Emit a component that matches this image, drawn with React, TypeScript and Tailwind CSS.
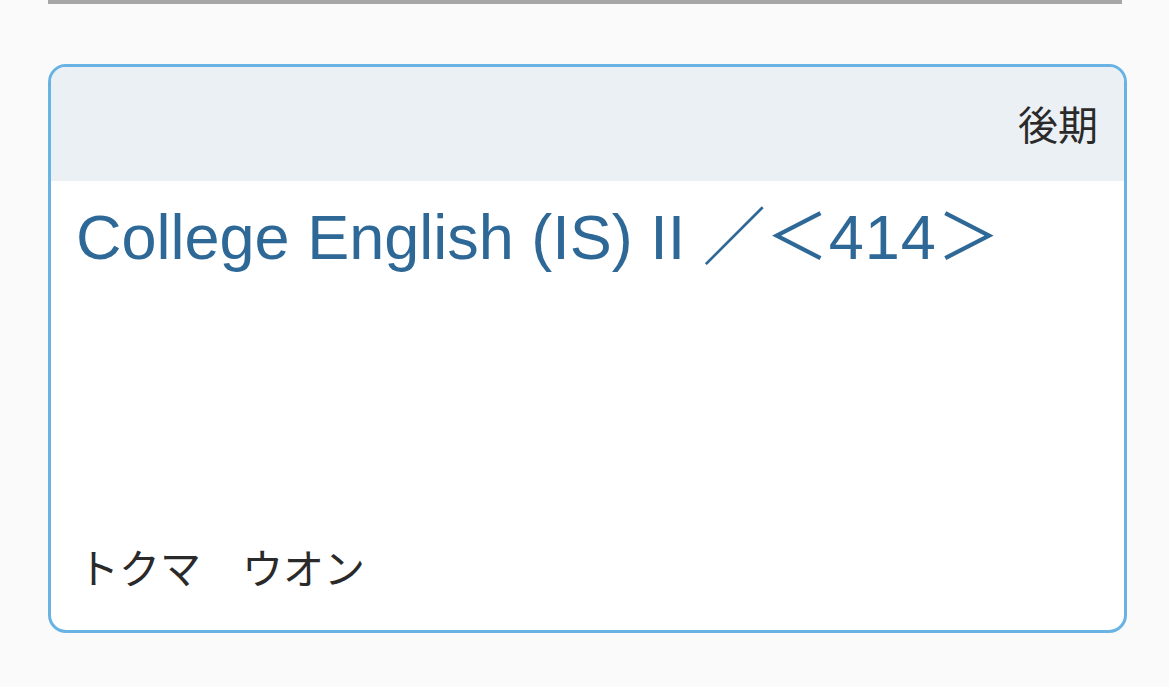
export default function App() {
  return (
    <div
      className="min-h-[687px] w-full bg-[#fafafa] px-12"
      style={{ fontFamily: '"Liberation Sans", "Noto Sans CJK JP", sans-serif' }}
    >
      {/* divider */}
      <div className="mr-[-1px] h-1 bg-[#a6a6a6]" />

      {/* course card */}
      <div className="mr-[-6px] mt-[60px] overflow-hidden rounded-[18px] border-[3px] border-[#68b3e4] bg-white">
        <div className="flex h-[114px] items-center justify-end bg-[#ebf0f4] px-[26px] pb-[3px]">
          <span className="text-[40px] leading-none text-[#2a2a2a]" style={{ fontFamily: '"Noto Sans CJK JP", sans-serif' }}>
            後期
          </span>
        </div>
        <div className="flex h-[449px] flex-col justify-between pb-[43px] pl-[25px] pr-[26px] pt-[19px]">
          <div className="text-[63px] leading-[1.2] text-[#2e6897]">
            College English (IS) II ／＜<span className="tracking-[1px]">414</span>＞
          </div>
          <div className="pl-[2px] text-[41px] leading-none text-[#2a2a2a]" style={{ fontFamily: '"Noto Sans CJK JP", sans-serif' }}>
            トクマ　ウオン
          </div>
        </div>
      </div>
    </div>
  );
}
